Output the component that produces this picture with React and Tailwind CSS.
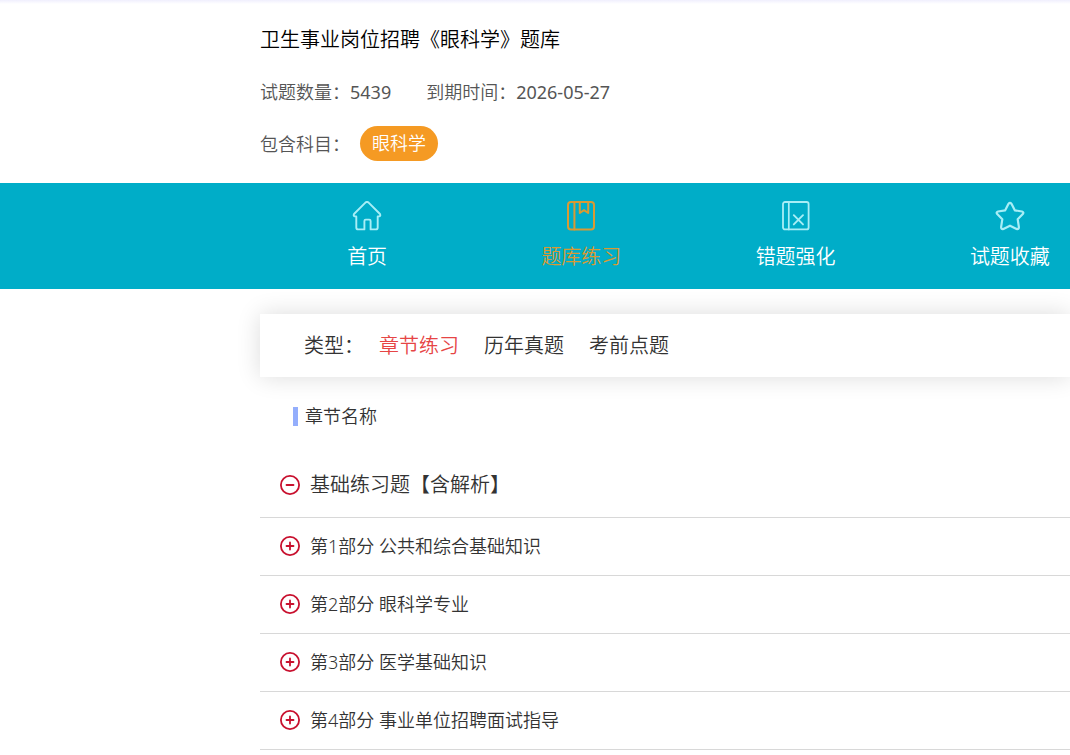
import React from "react";

function HomeIcon() {
  return (
    <svg viewBox="0 0 30 30" className="size-[30px]" fill="none" stroke="currentColor" strokeWidth="1.9" strokeLinejoin="round" strokeLinecap="round" aria-hidden="true">
      <path d="M13.4 1.6Q15 0.3 16.6 1.6L28 13Q28.9 15.1 27 15.4H25.7V26.4Q25.7 28.4 23.8 28.4H18.6V20Q18.6 18.6 17.3 18.6H13.7Q12.4 18.6 12.4 20V28.4H6.2Q4.3 28.4 4.3 26.4V15.4H3Q1.1 15.1 2 13Z" />
    </svg>
  );
}

function BookIcon() {
  return (
    <svg viewBox="0 0 30 30" className="size-[30px]" fill="none" stroke="currentColor" strokeWidth="2" strokeLinejoin="round" strokeLinecap="round" aria-hidden="true">
      <rect x="2" y="1" width="26" height="27.4" rx="3" />
      <path d="M8.4 1V28.4M13.8 1V12L18 9.2L22.2 12V1" />
    </svg>
  );
}

function WrongIcon() {
  return (
    <svg viewBox="0 0 30 30" className="size-[30px]" fill="none" stroke="currentColor" strokeWidth="1.8" strokeLinejoin="round" strokeLinecap="round" aria-hidden="true">
      <rect x="2" y="1" width="25.6" height="27.4" rx="2" />
      <path d="M7.8 1V28.4" strokeWidth="1.7" />
      <path d="M12.8 14.2L22 23.4M22 14.2L12.8 23.4" strokeWidth="1.9" />
    </svg>
  );
}

function StarIcon() {
  return (
    <svg viewBox="0 0 30 30" className="size-[30px]" fill="none" stroke="currentColor" strokeWidth="2.2" strokeLinejoin="round" aria-hidden="true">
      <path d="M13.5 2.8Q15 0.8 16.5 2.8L19.8 9.3L27 10.5Q29.2 11.2 27.8 13.1L22.7 18.3L23.9 26.1Q23.8 28.6 21.6 27.9L15 24.7L8.4 27.9Q6.2 28.6 6.1 26.1L7.3 18.3L2.2 13.1Q0.8 11.2 3 10.5L10.2 9.3Z" />
    </svg>
  );
}

function ToggleIcon({ open }) {
  return (
    <svg viewBox="0 0 20 20" className="size-5 shrink-0 text-[#c8102e]" fill="none" stroke="currentColor" strokeWidth="1.8" strokeLinecap="round" aria-hidden="true">
      <circle cx="10" cy="10" r="9.1" />
      <path d={open ? "M6.5 10H13.5" : "M6.5 10H13.5M10 6.5V13.5"} />
    </svg>
  );
}

const navItems = [
  { label: "首页", Icon: HomeIcon },
  { label: "题库练习", Icon: BookIcon, active: true },
  { label: "错题强化", Icon: WrongIcon },
  { label: "试题收藏", Icon: StarIcon },
];

const types = ["章节练习", "历年真题", "考前点题"];

const parts = [
  "第1部分 公共和综合基础知识",
  "第2部分 眼科学专业",
  "第3部分 医学基础知识",
  "第4部分 事业单位招聘面试指导",
];

export default function App() {
  const [type, setType] = React.useState(types[0]);
  return (
    <div className="overflow-hidden bg-white font-['Noto_Sans','Noto_Sans_CJK_SC',sans-serif] font-[350] text-[#333]">
      <div className="h-1 bg-linear-to-b from-[#f0effd] to-white" />
      <header className="pt-[21px] pb-[22px] pl-[260px]">
        <h1 className="text-xl leading-[30px] text-black">卫生事业岗位招聘《眼科学》题库</h1>
        <dl className="mt-[23px] flex gap-[35px] text-lg leading-7 text-[#555]">
          <div className="flex">
            <dt>试题数量：</dt>
            <dd className="font-normal">5439</dd>
          </div>
          <div className="flex">
            <dt>到期时间：</dt>
            <dd className="font-normal">2026-05-27</dd>
          </div>
        </dl>
        <dl className="mt-5 flex items-center gap-2.5 text-lg text-[#555]">
          <dt>包含科目：</dt>
          <dd className="rounded-full bg-[#f59a23] px-3 leading-[35px] text-white">眼科学</dd>
        </dl>
      </header>

      <nav className="overflow-hidden bg-[#00adc8] pl-[260px]">
        <div className="grid min-w-[857px] grid-cols-4">
          {navItems.map(({ label, Icon, active }) => (
            <a
              key={label}
              href="#"
              className={`flex flex-col items-center gap-[11px] pt-[18px] pb-[17px] text-xl leading-[30px] ${active ? "text-[#d99a33]" : "text-white"}`}
            >
              <span className={active ? "" : "text-[#a8eef6]"}>
                <Icon />
              </span>
              {label}
            </a>
          ))}
        </div>
      </nav>

      <main className="pt-[25px] pl-[260px]">
        <div className="flex items-center bg-white py-4 pl-11 text-xl leading-[31px] shadow-[0_0_24px_rgba(0,0,0,0.14)]">
          <span className="mr-[15px] w-[60px]">类型：</span>
          <div className="flex gap-[25px]">
            {types.map((t) => (
              <button key={t} type="button" onClick={() => setType(t)} className={t === type ? "text-[#e64545]" : ""}>
                {t}
              </button>
            ))}
          </div>
        </div>

        <h2 className="mt-6 flex items-center gap-[7px] pl-[33px] text-lg leading-[30px]">
          <span className="h-[19px] w-[5px] bg-[#94aefc]" />
          章节名称
        </h2>

        <ul className="mt-[23px]">
          <li className="border-b border-[#d8d8d8]">
            <button type="button" className="flex w-full items-center gap-2.5 pt-4 pb-[17px] pl-5 text-xl leading-[30px]">
              <ToggleIcon open />
              基础练习题【含解析】
            </button>
          </li>
          {parts.map((p) => (
            <li key={p} className="border-b border-[#d8d8d8]">
              <button type="button" className="flex w-full items-center gap-2.5 pt-[13px] pb-[14px] pl-5 text-lg leading-[30px]">
                <ToggleIcon />
                {p}
              </button>
            </li>
          ))}
        </ul>
      </main>
    </div>
  );
}
